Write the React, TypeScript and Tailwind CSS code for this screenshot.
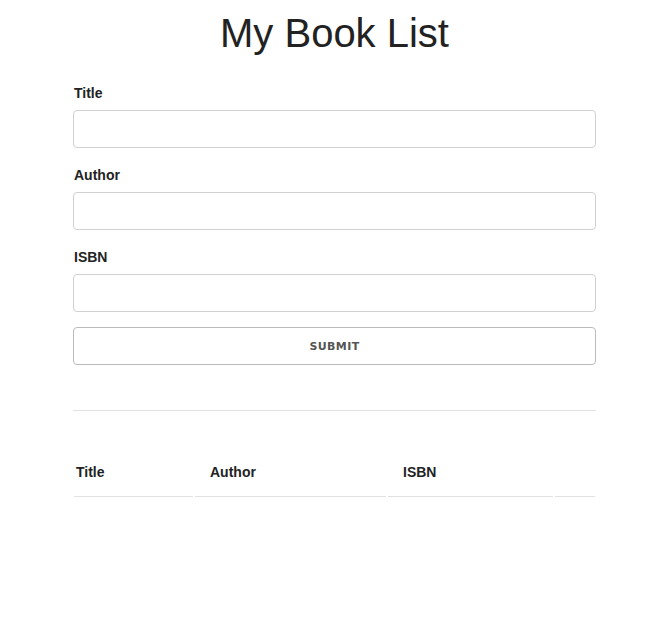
import React from "react";

const fields = ["Title", "Author", "ISBN"];

export default function App() {
  return (
    <div className="min-h-[625px] bg-white text-[#222] font-['Liberation_Sans',Arial,sans-serif]">
      <div className="w-[523px] ml-[73px]">
        <h1 className="text-center text-[40px] leading-[40px] pt-[13px] font-normal">My Book List</h1>

        {/* book form */}
        <form className="mt-[30px]" onSubmit={(e) => e.preventDefault()}>
          {fields.map((f) => (
            <div key={f} className="mb-[17px]">
              <label className="block text-[14px] leading-[20px] font-bold mb-[7px] pl-px">{f}</label>
              <input
                type="text"
                className="block w-full h-[38px] border border-[#d1d1d1] rounded-[4px] px-[10px] outline-none"
              />
            </div>
          ))}
          <button
            type="submit"
            className="block -mt-[2px] w-full h-[38px] pt-[3px] border border-[#bbb] rounded-[4px] bg-transparent text-[11px] font-bold tracking-[0.4px] uppercase text-[#555] font-['DejaVu_Sans',sans-serif]"
          >
            Submit
          </button>
        </form>

        <hr className="mt-[45px] border-0 border-t border-[#e1e1e1]" />

        {/* book list */}
        <table className="mt-[39px] -ml-px w-[525px] border-separate border-spacing-[2px] text-[14px]">
          <thead>
            <tr>
              <th className="w-[119px] text-left font-bold leading-[20px] pt-[10px] pb-[14px] pl-[2px] border-b border-[#e1e1e1]">Title</th>
              <th className="w-[191px] text-left font-bold leading-[20px] pt-[10px] pb-[14px] pl-[15px] border-b border-[#e1e1e1]">Author</th>
              <th className="w-[165px] text-left font-bold leading-[20px] pt-[10px] pb-[14px] pl-[15px] border-b border-[#e1e1e1]">ISBN</th>
              <th className="border-b border-[#e1e1e1]"></th>
            </tr>
          </thead>
          <tbody></tbody>
        </table>
      </div>
    </div>
  );
}
